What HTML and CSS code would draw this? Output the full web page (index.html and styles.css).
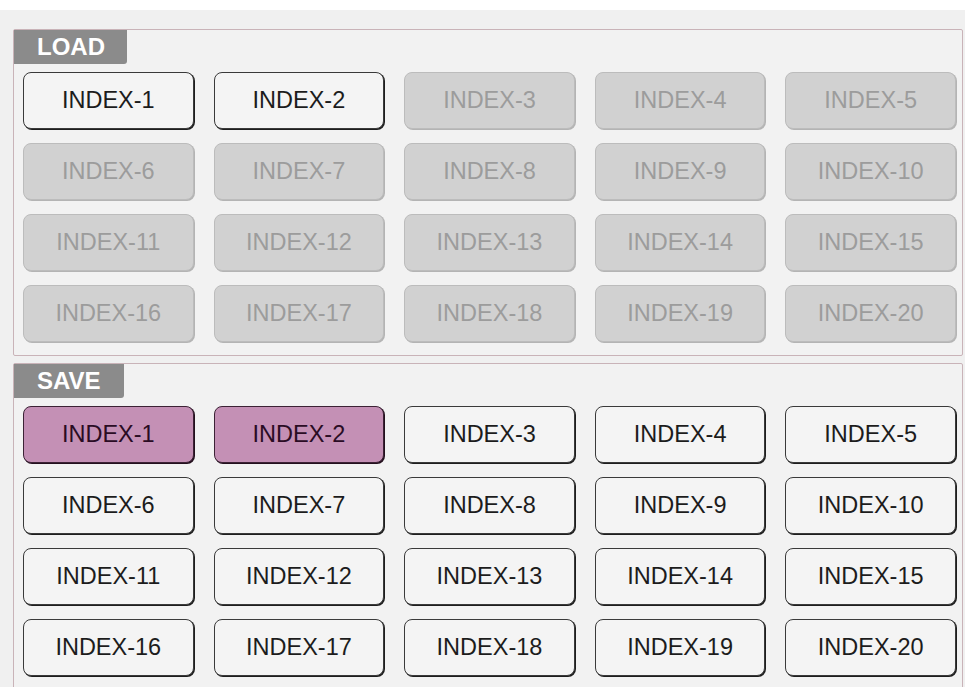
FILE: index.html
```html
<!DOCTYPE html>
<html>
<head>
  <title>Index Memory</title>
  <link rel="stylesheet" href="styles.css">
</head>
<body>
  <div class="screen">

    <div class="panel">
      <div class="tab">LOAD</div>
      <div class="grid">
        <button class="btn">INDEX-1</button>
        <button class="btn">INDEX-2</button>
        <button class="btn off">INDEX-3</button>
        <button class="btn off">INDEX-4</button>
        <button class="btn off">INDEX-5</button>
        <button class="btn off">INDEX-6</button>
        <button class="btn off">INDEX-7</button>
        <button class="btn off">INDEX-8</button>
        <button class="btn off">INDEX-9</button>
        <button class="btn off">INDEX-10</button>
        <button class="btn off">INDEX-11</button>
        <button class="btn off">INDEX-12</button>
        <button class="btn off">INDEX-13</button>
        <button class="btn off">INDEX-14</button>
        <button class="btn off">INDEX-15</button>
        <button class="btn off">INDEX-16</button>
        <button class="btn off">INDEX-17</button>
        <button class="btn off">INDEX-18</button>
        <button class="btn off">INDEX-19</button>
        <button class="btn off">INDEX-20</button>
      </div>
    </div>

    <div class="panel">
      <div class="tab">SAVE</div>
      <div class="grid">
        <button class="btn used">INDEX-1</button>
        <button class="btn used">INDEX-2</button>
        <button class="btn">INDEX-3</button>
        <button class="btn">INDEX-4</button>
        <button class="btn">INDEX-5</button>
        <button class="btn">INDEX-6</button>
        <button class="btn">INDEX-7</button>
        <button class="btn">INDEX-8</button>
        <button class="btn">INDEX-9</button>
        <button class="btn">INDEX-10</button>
        <button class="btn">INDEX-11</button>
        <button class="btn">INDEX-12</button>
        <button class="btn">INDEX-13</button>
        <button class="btn">INDEX-14</button>
        <button class="btn">INDEX-15</button>
        <button class="btn">INDEX-16</button>
        <button class="btn">INDEX-17</button>
        <button class="btn">INDEX-18</button>
        <button class="btn">INDEX-19</button>
        <button class="btn">INDEX-20</button>
      </div>
    </div>

  </div>
</body>
</html>
```

FILE: styles.css
```css
html, body {
  margin: 0;
  height: 100%;
  overflow: hidden;
  background: #ffffff;
  font-family: "Liberation Sans", Arial, sans-serif;
}

.screen {
  margin-top: 10px;
  padding: 19px 2px 0 13px;
  background: #f0f0f0;
  min-height: 700px;
  display: flex;
  flex-direction: column;
  gap: 7px;
}

.panel {
  border: 1px solid #c9b3b8;
  border-radius: 2px;
  background: #f2f2f2;
  padding-bottom: 13px;
}

.tab {
  display: inline-block;
  background: #8b8b8b;
  color: #ffffff;
  font-weight: bold;
  font-size: 24px;
  line-height: 34px;
  height: 34px;
  padding: 0 22px 0 23px;
  border-bottom-right-radius: 3px;
}

.panel + .panel .tab {
  padding-right: 23px;
}

.grid {
  display: grid;
  grid-template-columns: repeat(5, 1fr);
  column-gap: 20px;
  row-gap: 14px;
  margin: 8px 6px 0 9px;
}

.btn {
  height: 57px;
  border: 1px solid #3a3a3a;
  border-radius: 8px;
  box-shadow: 1px 1px 0 #1e1e1e;
  background: #f4f4f4;
  color: #1c1c1c;
  font: 23.5px "Liberation Sans", Arial, sans-serif;
  padding: 0;
  cursor: pointer;
}

.btn.off {
  background: #d1d1d1;
  border-color: #bcbcbc;
  box-shadow: 1px 1px 0 #b4b4b4;
  color: #9c9c9c;
}

.btn.used {
  background: #c490b5;
  border-color: #3c2235;
  box-shadow: 1px 1px 0 #24101e;
  color: #2a0c24;
}
```
